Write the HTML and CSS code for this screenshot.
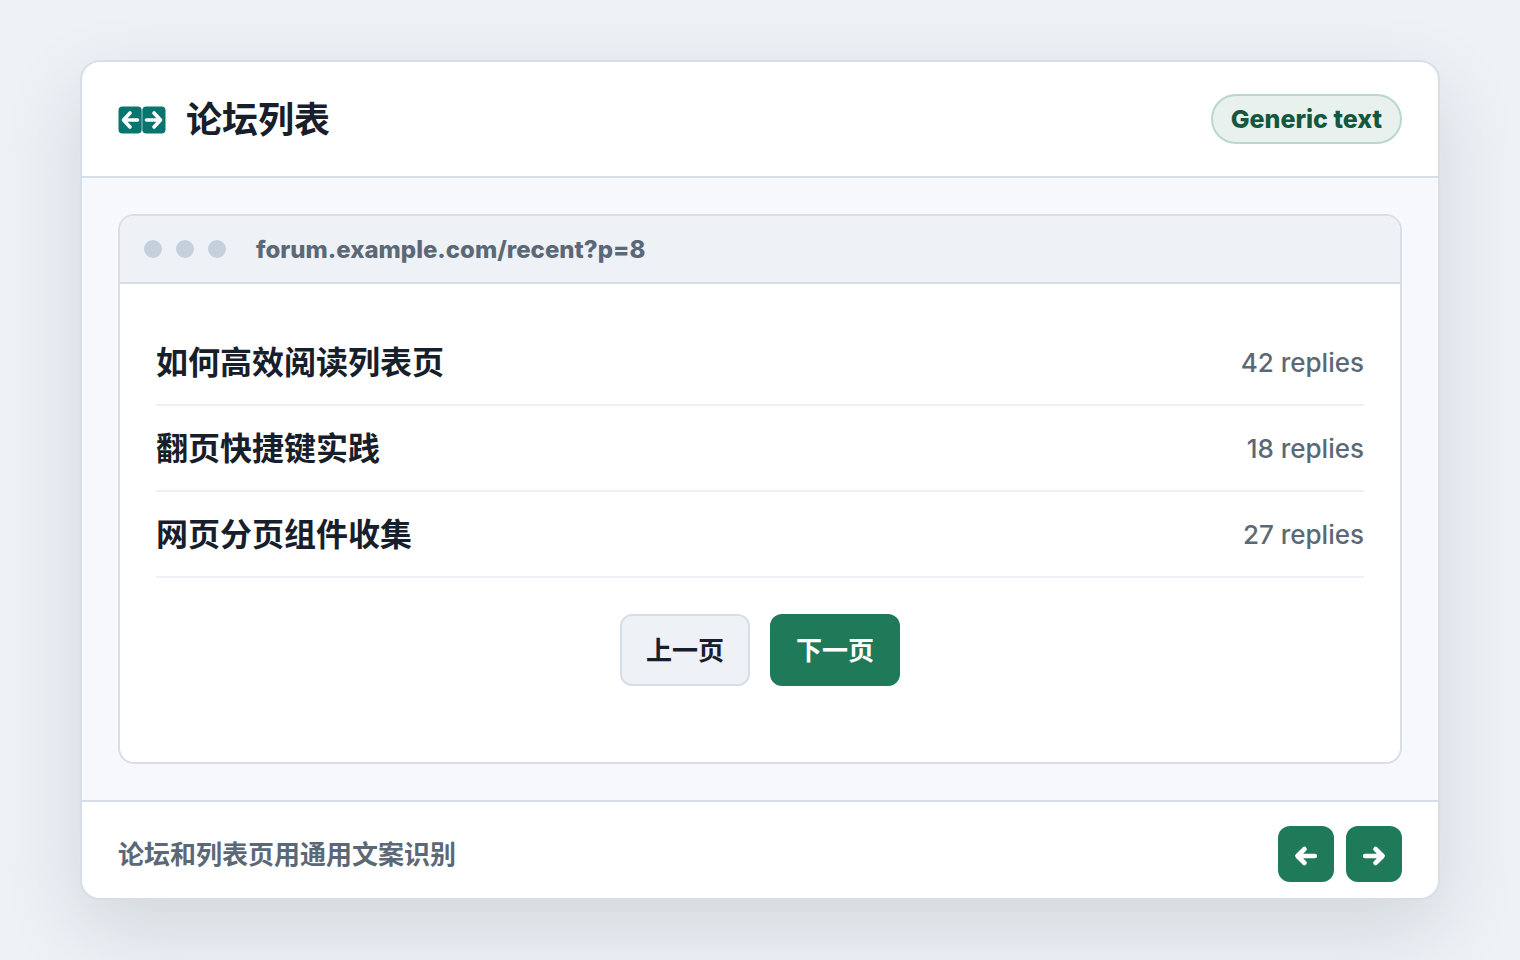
FILE: index.html
```html
<!DOCTYPE html>
<html lang="zh-CN">
<head>
    <meta charset="UTF-8">
    <meta name="viewport" content="width=device-width, initial-scale=1.0">
    <title>论坛列表</title>
    <link rel="stylesheet" href="styles.css">
</head>
<body>
    <main class="card">
        <header class="card-header">
            <div class="brand">
                <svg class="logo" viewBox="0 0 48 28" aria-hidden="true">
                    <rect x="0.5" y="0.5" width="23.2" height="27" rx="4" fill="#09756f"/>
                    <rect x="24.3" y="0.5" width="23.2" height="27" rx="4" fill="#09756f"/>
                    <g fill="none" stroke="#fff" stroke-width="3.6" stroke-linecap="round" stroke-linejoin="round">
                        <path d="M19.5 14H5.5M12 7L5.5 14L12 21"/>
                        <path d="M28.5 14H42.5M36 7L42.5 14L36 21"/>
                    </g>
                </svg>
                <h1>论坛列表</h1>
            </div>
            <span class="badge">Generic text</span>
        </header>

        <section class="stage">
            <div class="browser">
                <div class="browser-bar">
                    <div class="dots">
                        <span class="dot"></span>
                        <span class="dot"></span>
                        <span class="dot"></span>
                    </div>
                    <span class="url">forum.example.com/recent?p=8</span>
                </div>
                <div class="browser-page">
                    <ul class="topics">
                        <li class="topic">
                            <strong>如何高效阅读列表页</strong>
                            <span class="replies">42 replies</span>
                        </li>
                        <li class="topic">
                            <strong>翻页快捷键实践</strong>
                            <span class="replies">18 replies</span>
                        </li>
                        <li class="topic">
                            <strong>网页分页组件收集</strong>
                            <span class="replies">27 replies</span>
                        </li>
                    </ul>
                    <nav class="pager">
                        <button class="page-btn" type="button">上一页</button>
                        <button class="page-btn primary" type="button">下一页</button>
                    </nav>
                </div>
            </div>
        </section>

        <footer class="card-footer">
            <p>论坛和列表页用通用文案识别</p>
            <div class="keys">
                <button class="key" type="button" aria-label="上一页">
                    <svg viewBox="0 0 24 24" aria-hidden="true"><path d="M20.8 12H4M10.5 5L3.4 12L10.5 19"/></svg>
                </button>
                <button class="key" type="button" aria-label="下一页">
                    <svg viewBox="0 0 24 24" aria-hidden="true"><path d="M3.2 12H20M13.5 5L20.6 12L13.5 19"/></svg>
                </button>
            </div>
        </footer>
    </main>
</body>
</html>
```

FILE: styles.css
```css
* {
    box-sizing: border-box;
}

body {
    display: flex;
    min-height: 100vh;
    margin: 0;
    padding: 60px 80px;
    background-color: #eef2f7;
    color: #17202a;
    font-family: Inter, "Noto Sans CJK SC", sans-serif;
}

.card {
    display: flex;
    flex: 1;
    flex-direction: column;
    overflow: hidden;
    background-color: #fff;
    border: 2px solid #d8dee8;
    border-radius: 20px;
    box-shadow: 0 28px 80px rgba(23, 32, 42, 0.13);
}

.card-header {
    display: flex;
    align-items: center;
    justify-content: space-between;
    padding: 32px 36px;
    border-bottom: 2px solid #d8dee8;
}

.brand {
    display: flex;
    align-items: center;
    gap: 20px;
    padding-top: 2px;
}

.logo {
    width: 48px;
    height: 28px;
}

h1 {
    margin: 0;
    font-size: 36px;
    line-height: 48px;
    font-weight: 700;
}

.badge {
    padding: 8px 18px;
    border: 2px solid #b9d8cc;
    border-radius: 25px;
    background-color: #e8f1ee;
    color: #14573f;
    font-size: 25px;
    line-height: 30px;
    font-weight: 800;
}

.stage {
    display: flex;
    flex: 1;
    padding: 36px;
    background-color: #f6f8fc;
}

.browser {
    flex: 1;
    overflow: hidden;
    background-color: #fff;
    border: 2px solid #d8dee8;
    border-radius: 16px;
}

.browser-bar {
    display: flex;
    align-items: center;
    gap: 30px;
    padding: 17px 24px;
    background-color: #eef1f6;
    border-bottom: 2px solid #d8dee8;
}

.dots {
    display: flex;
    gap: 14px;
}

.dot {
    width: 18px;
    height: 18px;
    border-radius: 50%;
    background-color: #c5d0dd;
}

.url {
    padding-top: 2px;
    color: #5b6876;
    font-size: 24px;
    line-height: 30px;
    font-weight: 800;
}

.browser-page {
    padding: 36px;
}

.topics {
    margin: 0;
    padding: 0;
    list-style: none;
}

.topic {
    display: flex;
    align-items: center;
    justify-content: space-between;
    padding: 21px 0 19px;
    border-bottom: 2px solid #edf0f5;
    font-size: 32px;
    line-height: 44px;
}

.replies {
    color: #5b6876;
    font-size: 26px;
    font-weight: 500;
}

.pager {
    display: flex;
    justify-content: center;
    gap: 20px;
    margin-top: 36px;
}

.page-btn {
    padding: 19px 24px 17px;
    border: 2px solid #d8dee8;
    border-radius: 12px;
    background-color: #eef1f6;
    color: #17202a;
    font-family: inherit;
    font-size: 26px;
    line-height: 32px;
    font-weight: 700;
}

.page-btn.primary {
    border-color: #1f7a5a;
    background-color: #1f7a5a;
    color: #fff;
}

.card-footer {
    display: flex;
    align-items: center;
    justify-content: space-between;
    padding: 24px 36px 16px;
    border-top: 2px solid #d8dee8;
}

.card-footer p {
    margin: 0;
    padding-top: 2px;
    color: #5b6876;
    font-size: 26px;
    line-height: 32px;
    font-weight: 700;
}

.keys {
    display: flex;
    gap: 12px;
}

.key {
    display: flex;
    align-items: center;
    justify-content: center;
    width: 56px;
    height: 56px;
    padding: 4px 0 0;
    border: 0;
    border-radius: 12px;
    background-color: #1f7a5a;
}

.key svg {
    width: 24px;
    height: 24px;
    fill: none;
    stroke: #fff;
    stroke-width: 4.6;
    stroke-linecap: round;
    stroke-linejoin: round;
}
```
